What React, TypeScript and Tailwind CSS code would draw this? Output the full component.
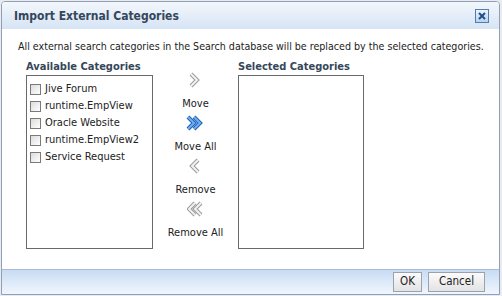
import React from "react";

const available = ["Jive Forum", "runtime.EmpView", "Oracle Website", "runtime.EmpView2", "Service Request"];

const Chevron = ({ dir, double, blue }: { dir: "right" | "left"; double?: boolean; blue?: boolean }) => {
  const stroke = blue ? "#1f5fb8" : "#9a9a9a";
  const fill = blue ? "#6fb0f0" : "#f2f2f2";
  const one = (x: number) =>
    dir === "right"
      ? `M${x} 2 L${x + 6} 8 L${x} 14`
      : `M${x + 6} 2 L${x} 8 L${x + 6} 14`;
  const xs = double ? [2, 8] : [5];
  return (
    <svg width="18" height="16" viewBox="0 0 18 16">
      {xs.map((x) => (
        <g key={x}>
          <path d={one(x)} fill="none" stroke={stroke} strokeWidth="4" strokeLinejoin="miter" />
          <path d={one(x)} fill="none" stroke={fill} strokeWidth="2" strokeLinejoin="miter" />
        </g>
      ))}
    </svg>
  );
};

const Shuttle = ({ label, dir, double, blue }: { label: string; dir: "right" | "left"; double?: boolean; blue?: boolean }) => (
  <div className="flex flex-col items-center">
    <Chevron dir={dir} double={double} blue={blue} />
    <span className="mt-[9px] leading-[13px]">{label}</span>
  </div>
);

export default function App() {
  return (
    <div className="w-[502px] h-[296px] bg-[#e9ebee] p-[1px] pr-[2px] font-['DejaVu_Sans_Condensed','Liberation_Sans',sans-serif] text-[11px] text-[#222]">
      <div className="flex flex-col h-full border border-[#8da0b8] rounded-t-[4px] overflow-hidden bg-white">
        {/* title bar */}
        <div className="h-[27px] shrink-0 flex items-center justify-between pl-[12px] pr-[10px] bg-gradient-to-b from-[#f3f7fc] to-[#d6e4f5]">
          <span className="text-[12px] font-bold text-[#35475a]">Import External Categories</span>
          <button className="w-[14px] h-[14px] border border-[#4f7db4] bg-gradient-to-b from-[#eef5fd] to-[#b9d2ee] flex items-center justify-center">
            <svg width="8" height="8" viewBox="0 0 8 8">
              <path d="M1 1 L7 7 M7 1 L1 7" stroke="#1f4f8a" strokeWidth="2" />
            </svg>
          </button>
        </div>

        <div className="flex-1 px-[16px]">
          <p className="mt-[10px] leading-[14px] whitespace-nowrap text-[10.6px]">
            All external search categories in the Search database will be replaced by the selected categories.
          </p>
          <div className="flex mt-[7px] pl-[8px]">
            <div className="flex flex-col">
              <span className="font-bold text-[11px] text-[#35475a] leading-[13px]">Available Categories</span>
              <div className="mt-[2px] w-[127px] h-[174px] border border-[#6a6a6a] pt-[5px] pl-[3px]">
                {available.map((c) => (
                  <label key={c} className="flex items-center h-[17px]">
                    <span className="w-[11px] h-[11px] border border-[#7a7a7a] bg-gradient-to-br from-[#dcdcdc] to-white mr-[4px]" />
                    {c}
                  </label>
                ))}
              </div>
            </div>

            <div className="w-[85px] flex flex-col items-center pt-[12px] gap-[5px]">
              <Shuttle label="Move" dir="right" />
              <Shuttle label="Move All" dir="right" double blue />
              <Shuttle label="Remove" dir="left" />
              <Shuttle label="Remove All" dir="left" double />
            </div>

            <div className="flex flex-col">
              <span className="font-bold text-[11px] text-[#35475a] leading-[13px]">Selected Categories</span>
              <div className="mt-[2px] w-[126px] h-[174px] border border-[#6a6a6a]" />
            </div>
          </div>
        </div>

        {/* footer */}
        <div className="h-[25px] shrink-0 border-t border-[#a8bcd4] bg-gradient-to-b from-[#c8dcf4] to-[#f1f6fd] flex items-center justify-end gap-[6px] pr-[14px]">
          <button className="h-[20px] px-[6px] border border-[#9aa3ad] bg-gradient-to-b from-[#fbfbfb] to-[#e3e3e3] text-[11.5px] text-[#222]">OK</button>
          <button className="h-[20px] w-[57px] border border-[#9aa3ad] bg-gradient-to-b from-[#fbfbfb] to-[#e3e3e3] text-[11.5px] text-[#222]">Cancel</button>
        </div>
      </div>
    </div>
  );
}
